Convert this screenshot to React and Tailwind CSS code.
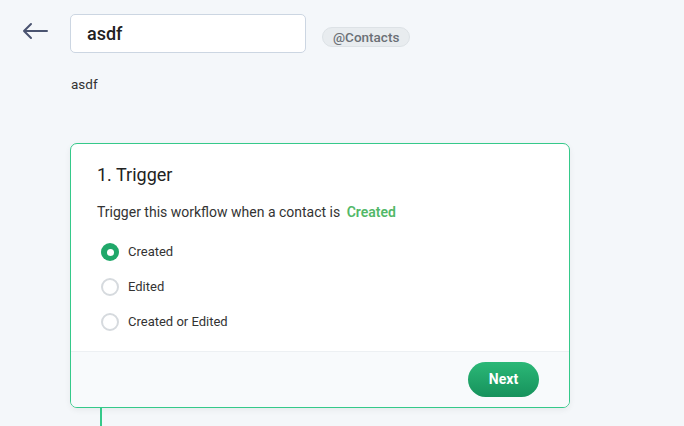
export default function App() {
  const font = { fontFamily: "Roboto, 'Liberation Sans', sans-serif" };
  const Radio = ({ checked, label }) => (
    <div className="flex items-center h-[18px]">
      {checked ? (
        <div className="w-[18px] h-[18px] rounded-full bg-[#20a86a] flex items-center justify-center">
          <div className="w-[7px] h-[7px] rounded-full bg-white" />
        </div>
      ) : (
        <div className="w-[18px] h-[18px] rounded-full border-2 border-[#d6dade] bg-white" />
      )}
      <span className="ml-[9px] text-[13px] text-[#333]">{label}</span>
    </div>
  );
  return (
    <div className="w-[684px] h-[426px] bg-[#f4f7fa] overflow-hidden flex items-start" style={font}>
      <div className="w-[70px] pl-[22px] pt-[22px] shrink-0">
        <svg width="26" height="18" viewBox="0 0 26 18" fill="none" stroke="#4a5470" strokeWidth="2" strokeLinecap="round" strokeLinejoin="round">
          <path d="M25 9H2M9 2L2 9l7 7" />
        </svg>
      </div>
      <div className="flex flex-col pt-[14px] shrink-0">
        <div className="flex items-start">
          <div className="w-[236px] h-[39px] bg-white border border-[#ccd6e2] rounded-[5px] flex items-center pl-[16px] text-[18px] font-medium text-[#222]">
            asdf
          </div>
          <div className="ml-[16px] mt-[13px] h-[20px] px-[10px] rounded-full bg-[#e8ecef] border border-[#dde2e6] flex items-center text-[13.5px] font-medium text-[#6b7076]">
            @Contacts
          </div>
        </div>
        <div className="mt-[23px] text-[13.5px] leading-[16px] text-[#333] pl-[1px]">asdf</div>
        <div className="mt-[51px] w-[500px] h-[265px] shrink-0 bg-white border border-[#35c98a] rounded-[7px] shadow-[0_2px_6px_rgba(0,0,0,0.06)] flex flex-col overflow-hidden">
          <div className="flex-1 pl-[26px] pt-[19px]">
            <div className="text-[18px] leading-[24px] text-[#222]">1. Trigger</div>
            <div className="mt-[17px] text-[14px] leading-[16px] text-[#333]">
              Trigger this workflow when a contact is{" "}
              <span className="ml-[3px] font-semibold text-[#52b868]">Created</span>
            </div>
            <div className="mt-[23px] pl-[4px] flex flex-col gap-[17px]">
              <Radio checked label="Created" />
              <Radio label="Edited" />
              <Radio label="Created or Edited" />
            </div>
          </div>
          <div className="h-[56px] shrink-0 bg-[#f8fafc] border-t border-[#edf0f3] flex items-center justify-end pr-[30px]">
            <div className="w-[71px] h-[35px] rounded-full bg-gradient-to-b from-[#2bb877] to-[#16925c] flex items-center justify-center text-white text-[14px] font-bold">
              Next
            </div>
          </div>
        </div>
        <div className="ml-[30px] w-[2px] h-[30px] shrink-0 bg-[#35c98a]" />
      </div>
    </div>
  );
}
